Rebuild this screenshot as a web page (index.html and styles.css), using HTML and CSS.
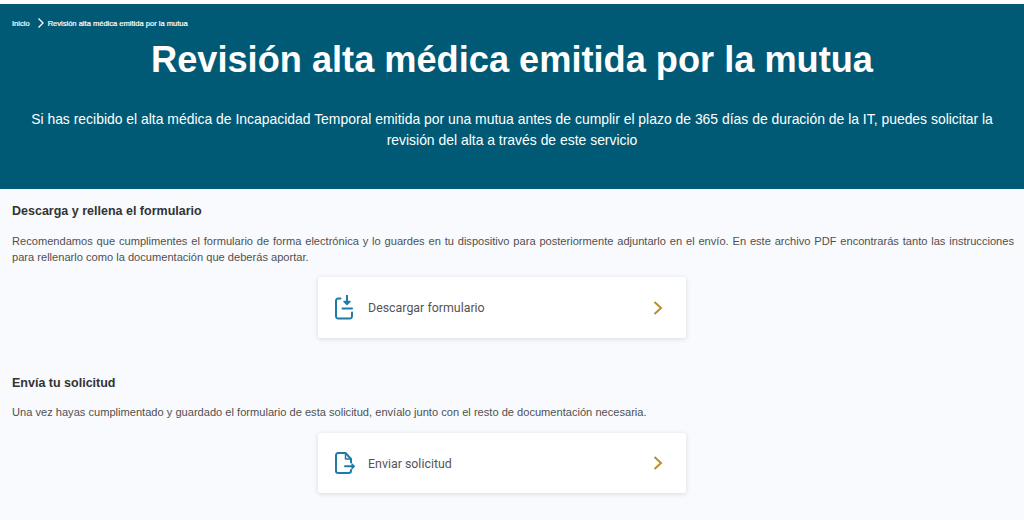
FILE: index.html
```html
<!DOCTYPE html>
<html lang="es">
<head>
<meta charset="utf-8">
<title>Revisión alta médica emitida por la mutua</title>
<link rel="stylesheet" href="styles.css">
</head>
<body>
<header class="hero">
  <nav class="crumbs">
    <a>Inicio</a>
    <svg class="crumb-sep" viewBox="0 0 8 10" width="8" height="10"><path d="M1.500 .5l4.500 4.500-4.500 4.500" fill="none" stroke="#fff" stroke-width="1.300"/></svg>
    <span>Revisión alta médica emitida por la mutua</span>
  </nav>
  <h1>Revisión alta médica emitida por la mutua</h1>
  <p class="lead">Si has recibido el alta médica de Incapacidad Temporal emitida por una mutua antes de cumplir el plazo de 365 días de duración de la IT, puedes solicitar la revisión del alta a través de este servicio</p>
</header>
<main class="content">
  <section class="block first">
    <h2>Descarga y rellena el formulario</h2>
    <p>Recomendamos que cumplimentes el formulario de forma electrónica y lo guardes en tu dispositivo para posteriormente adjuntarlo en el envío. En este archivo PDF encontrarás tanto las instrucciones para rellenarlo como la documentación que deberás aportar.</p>
    <a class="card">
      <svg class="icon" viewBox="0 0 20 26" width="20" height="26" fill="none" stroke="#1f7ba6" stroke-width="2" stroke-linecap="round" stroke-linejoin="round">
        <path d="M5.500 3.500H3.200A2.200 2.200 0 0 0 1 5.700V21.300A2.200 2.200 0 0 0 3.200 23.500H14.800A2.200 2.200 0 0 0 17 21.300V17.500"/>
        <path d="M12 .5V6"/><path d="M9 6.500H15L12 9.500Z" fill="#1f7ba6" stroke-width="1.500"/><path d="M7.500 13.500H17"/>
      </svg>
      <span class="label">Descargar formulario</span>
      <svg class="chev" viewBox="0 0 10 14" width="10" height="14"><path d="M1.500 1L8 7L1.500 13" fill="none" stroke="#b8902c" stroke-width="2"/></svg>
    </a>
  </section>
  <section class="block second">
    <h2>Envía tu solicitud</h2>
    <p>Una vez hayas cumplimentado y guardado el formulario de esta solicitud, envíalo junto con el resto de documentación necesaria.</p>
    <a class="card">
      <svg class="icon" viewBox="0 0 20 26" width="20" height="26" fill="none" stroke="#1f7ba6" stroke-width="2" stroke-linecap="round" stroke-linejoin="round">
        <path d="M16 12.500V9L10.500 3H3.200A2.200 2.200 0 0 0 1 5.200V20.800A2.200 2.200 0 0 0 3.200 23H13.800A2.200 2.200 0 0 0 16 20.800V20"/>
        <path d="M10.500 3.500V9H15.500" stroke-width="1.500"/><path d="M10 16.300H17"/><path d="M17 13.800L19.500 16.300L17 18.800Z" fill="#1f7ba6" stroke-width="1.200"/>
      </svg>
      <span class="label">Enviar solicitud</span>
      <svg class="chev" viewBox="0 0 10 14" width="10" height="14"><path d="M1.500 1L8 7L1.500 13" fill="none" stroke="#b8902c" stroke-width="2"/></svg>
    </a>
  </section>
</main>
</body>
</html>
```
FILE: styles.css
```css
* { box-sizing: border-box; }
html, body { margin: 0; padding: 0; }
body {
  height: 520px;
  overflow: hidden;
  padding-top: 4px;
  background: #fff;
  font-family: "Liberation Sans", Arial, sans-serif;
  color: #333;
}
.hero {
  height: 185px;
  background: #005a75;
  color: #fff;
  padding: 14px 12px 0;
}
.crumbs {
  display: flex;
  align-items: center;
  gap: 5px;
  height: 10px;
  font-size: 7.550px;
  -webkit-text-stroke: .2px #fff;
}
.crumb-sep { margin: 0 -2px 0 2px; }
h1 {
  margin: 9px 0 0;
  text-align: center;
  font-size: 36.200px;
  line-height: 46px;
  font-weight: 700;
}
.lead {
  margin: 26px 0 0;
  padding: 0 8px;
  text-align: center;
  font-size: 13.930px;
  line-height: 21px;
}
.content {
  height: 331px;
  background: #f8fafd;
  padding: 0 10px 0 12px;
}
.block { display: flex; flex-direction: column; }
.block.first { padding-top: 14px; height: 186px; }
h2 {
  margin: 0;
  font-size: 12.500px;
  line-height: 16px;
  font-weight: 700;
  color: #333;
}
.block p {
  margin: 14px 0 0;
  font-size: 11.100px;
  line-height: 16px;
  text-align: justify;
  color: #505050;
}
.block.second p { margin-top: 13px; }
.card {
  align-self: center;
  display: flex;
  align-items: center;
  width: 368px;
  height: 61px;
  margin: 12px 22px 0 0;
  padding: 0 23px 0 17px;
  background: #fff;
  border-radius: 3px;
  box-shadow: 0 1px 5px rgba(30, 50, 80, .16);
}
.block.second .card { height: 60px; margin-top: 13px; }
.icon { flex: none; }
.label {
  flex: 1;
  margin-left: 13px;
  font-family: Roboto, sans-serif;
  font-size: 12.400px;
  color: #555;
}
.chev { flex: none; }
```
